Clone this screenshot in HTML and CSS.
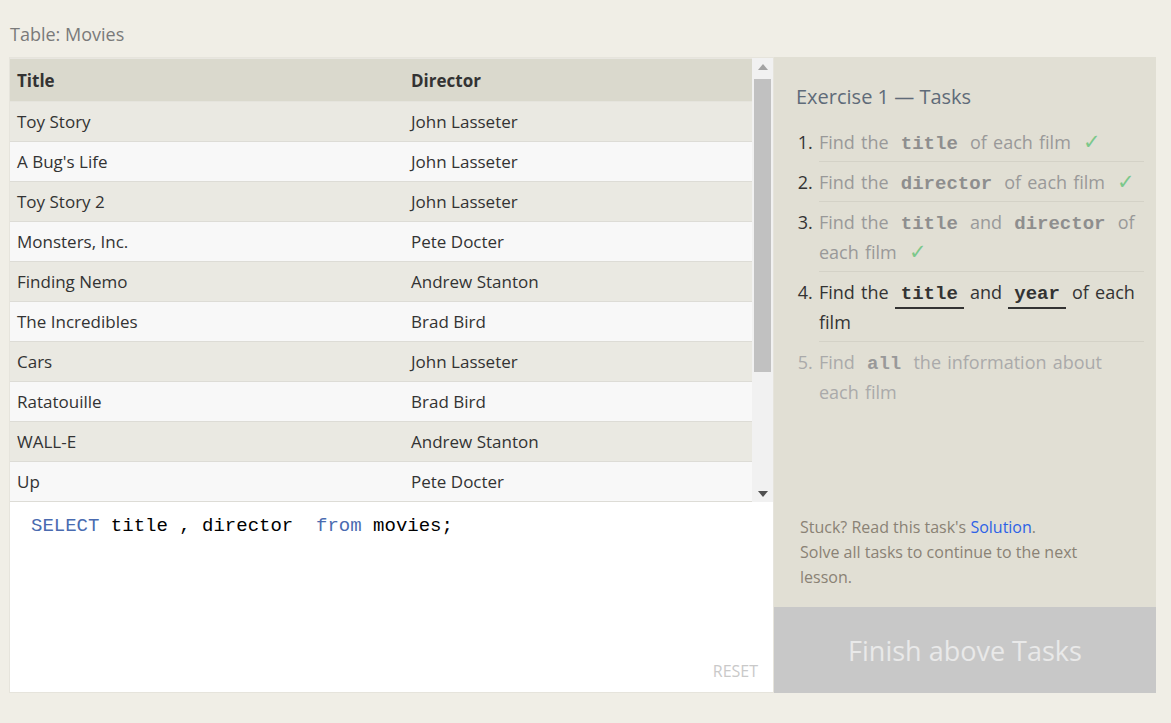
FILE: index.html
```html
<!DOCTYPE html>
<html>
<head>
<meta charset="utf-8">
<link rel="stylesheet" href="styles.css">
</head>
<body>
<h2 class="table-label">Table: Movies</h2>
<div class="wrap">
  <div class="left">
    <div class="table-area">
      <div class="table-scroll">
        <table class="movies">
          <thead>
            <tr><th class="c1">Title</th><th>Director</th></tr>
          </thead>
          <tbody>
            <tr><td>Toy Story</td><td>John Lasseter</td></tr>
            <tr><td>A Bug's Life</td><td>John Lasseter</td></tr>
            <tr><td>Toy Story 2</td><td>John Lasseter</td></tr>
            <tr><td>Monsters, Inc.</td><td>Pete Docter</td></tr>
            <tr><td>Finding Nemo</td><td>Andrew Stanton</td></tr>
            <tr><td>The Incredibles</td><td>Brad Bird</td></tr>
            <tr><td>Cars</td><td>John Lasseter</td></tr>
            <tr><td>Ratatouille</td><td>Brad Bird</td></tr>
            <tr><td>WALL-E</td><td>Andrew Stanton</td></tr>
            <tr><td>Up</td><td>Pete Docter</td></tr>
          </tbody>
        </table>
      </div>
      <div class="scrollbar">
        <div class="sb-btn"><svg width="10" height="6" viewBox="0 0 10 6"><polygon points="0,6 10,6 5,0" fill="#a3a3a3"/></svg></div>
        <div class="sb-track"><div class="sb-thumb"></div></div>
        <div class="sb-btn"><svg width="10" height="6" viewBox="0 0 10 6"><polygon points="0,0 10,0 5,6" fill="#505050"/></svg></div>
      </div>
    </div>
    <div class="editor">
      <div class="code"><span class="kw">SELECT</span> title , director  <span class="kw">from</span> movies;</div>
      <div class="reset">RESET</div>
    </div>
  </div>
  <div class="right">
    <div class="tasks">
      <h3 class="tasks-title">Exercise 1 — Tasks</h3>
      <ol class="task-list">
        <li class="done">Find the <code>title</code> of each film <span class="check">✓</span></li>
        <li class="done">Find the <code>director</code> of each film <span class="check">✓</span></li>
        <li class="done">Find the <code>title</code> and <code>director</code> of each film <span class="check">✓</span></li>
        <li class="active">Find the <code>title</code> and <code>year</code> of each film</li>
        <li class="todo">Find <code>all</code> the information about each film</li>
      </ol>
      <div class="hint">
        <p>Stuck? Read this task's <a class="link">Solution</a>.</p>
        <p>Solve all tasks to continue to the next lesson.</p>
      </div>
    </div>
    <div class="finish">Finish above Tasks</div>
  </div>
</div>
</body>
</html>
```
FILE: styles.css
```css
* { box-sizing: border-box; }
body {
  margin: 0;
  background: #f0eee6;
  font-family: "Open Sans", "Noto Sans", sans-serif;
  color: #333;
}
.table-label {
  margin: 0;
  padding: 22px 0 0 10px;
  height: 57px;
  font-size: 18px;
  line-height: 24px;
  font-weight: normal;
  color: #7a7a7a;
}
.wrap {
  display: flex;
  padding: 0 15px 0 9px;
}
.left {
  width: 765px;
  height: 636px;
  border: 1px solid #e6e4dc;
  display: flex;
  flex-direction: column;
  background: #fff;
}
.table-area {
  display: flex;
  height: 444px;
}
.table-scroll {
  width: 742px;
  overflow: hidden;
}
.movies {
  width: 742px;
  border-collapse: collapse;
  font-size: 17px;
}
.movies th {
  background: #dad9cd;
  text-align: left;
  font-weight: bold;
  height: 43px;
  padding: 1px 7px 0 7px;
  border-bottom: 1px solid #e5e4dd;
  border-top: 1px solid #e8e6e0;
}
.movies th.c1 { width: 394px; }
.movies td {
  height: 40px;
  padding: 0 7px;
  border-bottom: 1px solid #dddcd6;
}
.movies tbody tr:nth-child(odd) td { background: #eae9e2; }
.movies tbody tr:nth-child(even) td { background: #f8f8f8; }
.scrollbar {
  width: 21px;
  background: #f1f1f1;
  display: flex;
  flex-direction: column;
}
.sb-btn {
  height: 17px;
  display: flex;
  align-items: center;
  justify-content: center;
}
.sb-track {
  flex: 1;
  padding: 4px 2px 0 2px;
}
.sb-thumb {
  height: 293px;
  background: #c1c1c1;
}
.editor {
  flex: 1;
  display: flex;
  flex-direction: column;
  background: #fff;
  padding: 12px 15px 10px 21px;
}
.code {
  font-family: "Liberation Mono", "DejaVu Sans Mono", monospace;
  font-size: 19px;
  line-height: 24px;
  white-space: pre;
  color: #000;
}
.kw { color: #4a6bb0; }
.reset {
  margin-top: auto;
  align-self: flex-end;
  font-size: 16px;
  color: #c9c9c9;
  line-height: 22px;
}
.right {
  width: 382px;
  display: flex;
  flex-direction: column;
}
.tasks {
  flex: 1;
  background: #e1dfd4;
  padding: 26px 12px 17px 22px;
  display: flex;
  flex-direction: column;
}
.tasks-title {
  margin: 0;
  font-size: 20px;
  line-height: 28px;
  font-weight: normal;
  color: #5f6b79;
}
.task-list {
  margin: 11px 0 0 0;
  padding: 0 0 0 23px;
  font-size: 18px;
  line-height: 30px;
  word-spacing: 1.5px;
}
.task-list li {
  padding: 5px 0 4px 0;
  border-bottom: 1px solid #d4d2c7;
}
.task-list li:last-child { border-bottom: none; }
.task-list li::marker { color: #333; }
.task-list li.todo::marker { color: #aaa; }
.task-list code {
  font-family: "Liberation Mono", "DejaVu Sans Mono", monospace;
  font-weight: bold;
  font-size: 19px;
  line-height: 20px;
  padding: 0 6px;
}
.done { color: #999; }
.done code { color: #8e8e8e; }
.active { color: #333; }
.active code {
  color: #333;
  border-bottom: 2px solid #333;
  padding: 0 6px 2px 6px;
}
.todo { color: #aaa; }
.todo code { color: #999; }
.check {
  color: #7cc88b;
  margin-left: 6px;
  font-size: 21px;
  line-height: 20px;
}
.hint {
  margin-top: auto;
  padding-left: 4px;
  max-width: 315px;
  font-size: 16px;
  line-height: 25px;
  color: #8a8275;
}
.hint p { margin: 0; }
.link { color: #2d62e6; }
.finish {
  height: 86px;
  background: #c8c8c8;
  color: #e9e9e9;
  font-size: 27px;
  display: flex;
  align-items: center;
  justify-content: center;
}
```
